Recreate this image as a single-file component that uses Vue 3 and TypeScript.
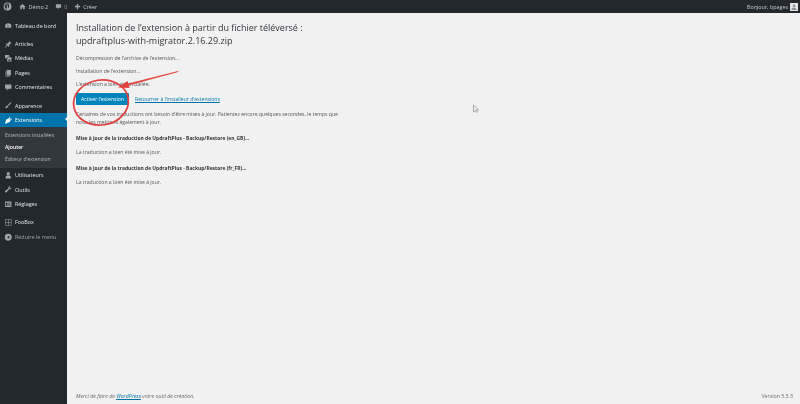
<script setup lang="ts">
interface Item { label: string; icon: string; gap?: boolean; active?: boolean; muted?: boolean }
const top: Item[] = [
  { label: 'Tableau de bord', icon: 'M2 10a6 6 0 1 1 12 0c0 1-.3 2-.8 2.800H2.800C2.300 12 2 11 2 10zM8 9l-2-4.500L7.200 9a1 1 0 1 0 .8 0z' },
  { label: 'Articles', gap: true, icon: 'M10 2l4 4-1 1-.8-.4L9.500 9.300 10 12l-1 1-2.500-2.500L3 14l-1 0 0-1 3.500-3.500L3 7.500l1-1 2.700.5L9.400 4.300 9 3.500z' },
  { label: 'Médias', icon: 'M2 2h8v3H7.500v3H2zM6 6h8v8H6zM7.500 12.500h5l-1.600-3-1.400 2-1-1z' },
  { label: 'Pages', icon: 'M5 2h8v10H5zM3 4h1v9h7v1H3z' },
  { label: 'Commentaires', icon: 'M3 3h10a1 1 0 0 1 1 1v6a1 1 0 0 1-1 1H9l-3 3v-3H3a1 1 0 0 1-1-1V4a1 1 0 0 1 1-1z' },
  { label: 'Apparence', gap: true, icon: 'M13 2l1 1-5 6-2-1.500zM6.500 8.500l1.500 1.500c-.5 2.500-3 4-6 3.500 1.500-1 1-2.500 1.800-3.800.6-.9 1.700-1.300 2.700-1.200z' },
  { label: 'Extensions', active: true, icon: 'M11 2l1.300 1-2.300 3 1 1 3-2.300 1 1.300-3 2.500c-.5 2.500-2.500 4-5 3.500L5 14H2v-2l1.500-2C3 7.500 5 5 8 5z' },
]
const sub = [
  { label: 'Extensions installées' },
  { label: 'Ajouter', current: true },
  { label: 'Éditeur d’extension' },
]
const rest: Item[] = [
  { label: 'Utilisateurs', icon: 'M8 2a3 3 0 1 1 0 6 3 3 0 0 1 0-6zM3 14v-2.500C3 9.500 5 8.500 8 8.500s5 1 5 3V14z' },
  { label: 'Outils', icon: 'M14 4.500c0 2.500-2.200 4-4.500 3.300L4.500 14 2 13.500l-.3-2L8.200 6.500C7.500 4 9.500 2 12 2L10 4.500l1.500 1.500z' },
  { label: 'Réglages', icon: 'M2 3h12v10H2zM3.500 5v6h3V5zM8 5v1.500h4.500V5zM8 8v1h4.500V8zM8 10v1h4.500v-1z' },
  { label: 'FooBox', gap: true, icon: 'M2 2h12v12H2zM3 3v4.500h4.500V3zM8.500 3v4.500H13V3zM3 8.500V13h4.500V8.500zM8.500 8.500V13H13V8.500z' },
]
const steps = [
  'Décompression de l’archive de l’extension…',
  'Installation de l’extension…',
  'L’extension a bien été installée.',
]
</script>

<template>
  <div class="page">
    <header class="bar">
      <div class="bar-left">
        <svg class="wp" viewBox="0 0 16 16"><path fill-rule="evenodd" d="M8 1a7 7 0 1 1 0 14A7 7 0 0 1 8 1zM2.400 5.800 5.500 13.800 7.200 8.900 6.200 5.800H5.300V5.100H8.800V5.800H7.800L9.800 11.600 10.800 8.500C11.300 7 10.600 6.400 10.300 5.800 10 5.100 10.400 4.200 11.300 4.200 10.300 3.200 9.200 2.700 8 2.700 6 2.700 4 3.800 3 5.100H4.600V5.800z"/></svg>
        <span class="bar-item">
          <svg class="bi" viewBox="0 0 16 16"><path d="M8 2l7 6.500h-2V14H9.500v-4h-3v4H3V8.500H1z"/></svg>
          <span>Démo 2</span>
        </span>
        <span class="bar-item">
          <svg class="bi" viewBox="0 0 16 16"><path d="M3 3h10a1 1 0 0 1 1 1v6a1 1 0 0 1-1 1H9l-3 3v-3H3a1 1 0 0 1-1-1V4a1 1 0 0 1 1-1z"/></svg>
          <span class="count">0</span>
        </span>
        <span class="bar-item">
          <svg class="bi" viewBox="0 0 16 16"><path d="M6.500 2h3v4.500H14v3H9.500V14h-3V9.500H2v-3h4.500z"/></svg>
          <span>Créer</span>
        </span>
      </div>
      <div class="bar-right">
        <span>Bonjour, bpages</span>
        <span class="avatar"><svg viewBox="0 0 16 16"><path fill="#8d9094" d="M8 3a2.500 2.500 0 1 1 0 5 2.500 2.500 0 0 1 0-5zM3 14c0-3 2-5 5-5s5 2 5 5z"/></svg></span>
      </div>
    </header>

    <div class="body">
      <nav class="side">
        <div v-for="it in top" :key="it.label" class="item" :class="{ gap: it.gap, active: it.active }">
          <svg class="ic" viewBox="0 0 16 16"><path fill-rule="evenodd" :d="it.icon"/></svg>
          <span>{{ it.label }}</span>
        </div>
        <div class="submenu">
          <div v-for="s in sub" :key="s.label" class="sub" :class="{ current: s.current }">{{ s.label }}</div>
        </div>
        <div v-for="it in rest" :key="it.label" class="item" :class="{ gap: it.gap }">
          <svg class="ic" viewBox="0 0 16 16"><path fill-rule="evenodd" :d="it.icon"/></svg>
          <span>{{ it.label }}</span>
        </div>
        <div class="item collapse">
          <svg class="ic" viewBox="0 0 16 16"><path fill-rule="evenodd" d="M8 1.500a6.500 6.500 0 1 1 0 13 6.500 6.500 0 0 1 0-13zM10 5 5.500 8 10 11z"/></svg>
          <span>Réduire le menu</span>
        </div>
      </nav>

      <main class="main">
        <div class="content">
          <h1>Installation de l’extension à partir du fichier téléversé :<br>updraftplus-with-migrator.2.16.29.zip</h1>
          <p v-for="s in steps" :key="s" class="line">{{ s }}</p>
          <div class="actions">
            <a class="btn">Activer l’extension</a>
            <a class="link">Retourner à l’installeur d’extensions</a>
          </div>
          <p class="wrap">Certaines de vos traductions ont besoin d’être mises à jour. Patientez encore quelques secondes, le temps que nous les mettions également à jour.</p>
          <p class="strong">Mise à jour de la traduction de UpdraftPlus - Backup/Restore (en_GB)…</p>
          <p class="done">La traduction a bien été mise à jour.</p>
          <p class="strong">Mise à jour de la traduction de UpdraftPlus - Backup/Restore (fr_FR)…</p>
          <p class="done">La traduction a bien été mise à jour.</p>
        </div>
        <footer class="foot">
          <span class="thanks">Merci de faire de <a>WordPress</a> votre outil de création.</span>
          <span>Version 5.3.3</span>
        </footer>
      </main>
    </div>

    <svg class="marks" viewBox="0 0 800 404">
      <ellipse cx="101" cy="102.500" rx="27.500" ry="22.500" fill="none" stroke="#e2403f" stroke-width="1.700" transform="rotate(-8 101 102.500)"/>
      <path d="M178 71 178.200 72 126.500 86 126 84z" fill="#e2483f"/>
      <path d="M118 87.500l9.500-6.500 2 7z" fill="#e2403f"/>
      <path d="M473.500 105v7l1.700-1.500 1.200 2 1-.6-1.100-2h2.200z" fill="#f4f4f4" stroke="#777" stroke-width=".6"/>
    </svg>
  </div>
</template>

<style>
html, body { margin: 0; background: #f1f1f1; overflow: hidden; }
</style>

<style scoped>
.page {
  position: relative;
  width: 800px;
  height: 404px;
  display: flex;
  flex-direction: column;
  overflow: hidden;
  background: #f1f1f1;
  font-family: "Open Sans", "Noto Sans", sans-serif;
  filter: blur(0.45px);
}
.bar {
  height: 13px;
  flex: none;
  background: #23282d;
  color: #c8cbce;
  font-size: 5.400px;
  display: flex;
  align-items: center;
  justify-content: space-between;
  padding: 0 2px 0 3px;
}
.bar-left { display: flex; align-items: center; }
.wp { width: 9px; height: 9px; fill: #a0a5aa; margin-right: 7px; }
.bar-item { display: flex; align-items: center; gap: 2.500px; margin-right: 6.500px; }
.bi { width: 7px; height: 7px; fill: #a0a5aa; }
.count { color: #8a8f94; }
.bar-right { display: flex; align-items: center; gap: 2px; }
.avatar { width: 8px; height: 8px; background: #e4e4e4; display: block; }
.avatar svg { display: block; width: 100%; height: 100%; }
.body { flex: 1; display: flex; min-height: 0; }
.side {
  width: 67px;
  flex: none;
  background: #23282d;
  padding-top: 5.500px;
  color: #e6e7e8;
  font-size: 5.400px;
}
.item {
  height: 14.400px;
  display: flex;
  align-items: center;
  padding-left: 3.500px;
  gap: 3px;
}
.item.gap { margin-top: 4px; }
.item.active { background: #0073aa; color: #fff; position: relative; }
.item.active::after {
  content: "";
  position: absolute;
  right: 0;
  top: 4.500px;
  border: 2.800px solid transparent;
  border-right-color: #f1f1f1;
}
.ic { width: 8.500px; height: 8.500px; fill: #a0a5aa; flex: none; }
.active .ic { fill: #fff; }
.submenu { background: #32373c; padding: 3px 0 2.500px; color: #b4b9be; }
.sub { height: 11.800px; line-height: 11.800px; padding-left: 5px; font-size: 5.100px; }
.sub.current { color: #fff; font-weight: 600; }
.collapse { color: #a0a5aa; }
.main { flex: 1; display: flex; flex-direction: column; min-width: 0; }
.content { flex: 1; padding: 9px 6px 0 9px; color: #444; font-size: 5.100px; }
h1 {
  margin: 0 0 6.500px;
  font-size: 9px;
  line-height: 12.600px;
  font-weight: 400;
  color: #32373c;
}
p { margin: 0; }
.line { height: 13.100px; line-height: 8px; color: #555; }
.actions { display: flex; align-items: center; gap: 6px; margin-top: -1px; height: 14px; }
.btn {
  width: 53px;
  height: 12px;
  background: #0085ba;
  color: #fff;
  border-radius: 1px;
  display: flex;
  align-items: center;
  justify-content: center;
}
.link { color: #0073aa; text-decoration: underline; }
.wrap { margin-top: 5.500px; line-height: 7.700px; width: 268px; color: #555; }
.strong { margin-top: 7.700px; font-size: 4.950px; font-weight: 700; color: #333; line-height: 7.500px; }
.done { margin-top: 7.300px; line-height: 7.500px; color: #555; }
.foot {
  height: 16px;
  flex: none;
  display: flex;
  align-items: center;
  justify-content: space-between;
  padding: 0 7px 0 9px;
  font-size: 5.250px;
  color: #666;
}
.thanks { font-style: italic; }
.thanks a { color: #0073aa; text-decoration: underline; }
.marks { position: absolute; inset: 0; width: 800px; height: 404px; pointer-events: none; }
</style>
